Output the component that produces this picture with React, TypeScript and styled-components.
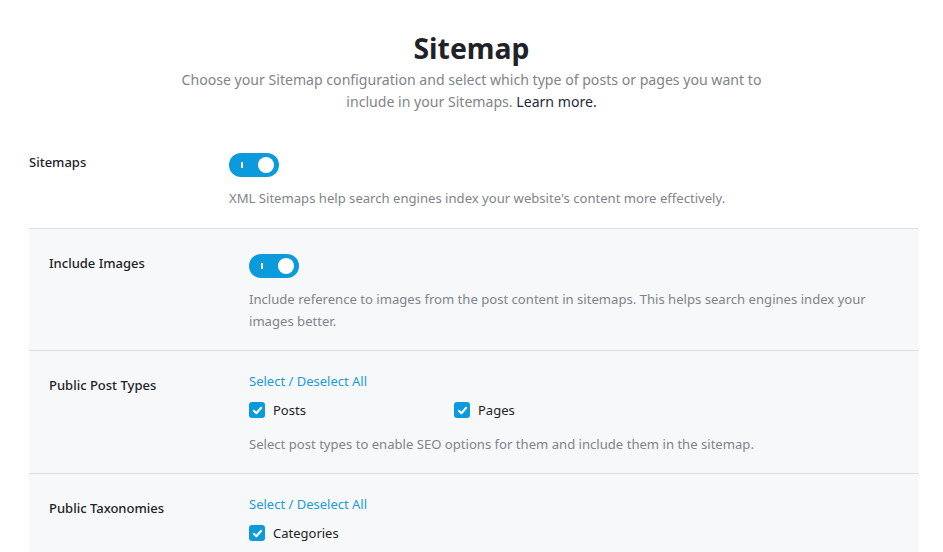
import React from 'react';
import styled, { createGlobalStyle } from 'styled-components';

const GlobalStyle = createGlobalStyle`
  body {
    margin: 0;
    background: #ffffff;
    font-family: 'Noto Sans', 'Open Sans', sans-serif;
    color: #1d2327;
  }
`;

const Page = styled.div`
  width: 943px;
  height: 552px;
  overflow: hidden;
  padding-top: 28px;
  box-sizing: border-box;
`;

const Header = styled.header`
  text-align: center;
  margin-bottom: 39px;
`;

const Title = styled.h1`
  margin: 0;
  font-size: 28.4px;
  line-height: 40px;
  font-weight: 700;
  color: #1f2329;
`;

const Intro = styled.p`
  margin: 1px auto 0;
  width: 600px;
  font-size: 14.1px;
  line-height: 22px;
  color: #80848a;
`;

const LearnMore = styled.a`
  color: #1f2a37;
  text-decoration: none;
`;

const Content = styled.div`
  width: 890px;
  margin-left: 29px;
`;

const Row = styled.div<{ $nested?: boolean }>`
  display: grid;
  grid-template-columns: 200px 1fr;
  padding: ${({ $nested }) => ($nested ? '24px 20px 18px' : '0 0 19px')};
  border-top: ${({ $nested }) => ($nested ? '1px solid #dcdfe4' : 'none')};
`;

const Panel = styled.div`
  background: #f7f8fa;
  border-top: 1px solid #dcdfe4;

  & > ${Row}:first-child {
    border-top: none;
  }
`;

const Label = styled.div`
  font-size: 13px;
  font-weight: 500;
  line-height: 20px;
  color: #1d2327;
`;

const Field = styled.div`
  display: flex;
  flex-direction: column;
  align-items: flex-start;
`;

const Help = styled.p`
  margin: 10px 0 0;
  font-size: 13.1px;
  line-height: 22px;
  color: #80848a;
  max-width: 640px;
`;

const Toggle = styled.span`
  position: relative;
  display: inline-block;
  margin-top: 1px;
  width: 50px;
  height: 24px;
  border-radius: 12px;
  background: #0b9bdc;

  &::before {
    content: '';
    position: absolute;
    left: 12px;
    top: 9px;
    width: 2px;
    height: 6px;
    background: #ffffff;
  }

  &::after {
    content: '';
    position: absolute;
    right: 5px;
    top: 4px;
    width: 16px;
    height: 16px;
    border-radius: 50%;
    background: #ffffff;
  }
`;

const SelectAll = styled.a`
  margin-top: -4px;
  font-size: 13px;
  line-height: 20px;
  color: #1a9cdb;
  text-decoration: none;
`;

const CheckGrid = styled.div`
  display: grid;
  grid-template-columns: 205px 205px;
  margin: 9px 0 3px;
`;

const CheckItem = styled.label`
  display: flex;
  align-items: center;
  gap: 8px;
  font-size: 13px;
  line-height: 20px;
  color: #1d2327;
`;

const Box = styled.span`
  display: inline-flex;
  align-items: center;
  justify-content: center;
  width: 16px;
  height: 16px;
  border-radius: 3px;
  background: #0b9bdc;
`;

const Check = () => (
  <Box>
    <svg width="11" height="11" viewBox="0 0 12 12" fill="none">
      <path d="M2 6.3 L4.8 9 L10 3" stroke="#fff" strokeWidth="2.2" strokeLinecap="round" strokeLinejoin="round" />
    </svg>
  </Box>
);

const App = () => {
  return (
    <>
      <GlobalStyle />
      <Page>
        <Header>
          <Title>Sitemap</Title>
          <Intro>
            Choose your Sitemap configuration and select which type of posts or pages you want to include in your
            Sitemaps. <LearnMore href="#">Learn more.</LearnMore>
          </Intro>
        </Header>
        <Content>
          <Row>
            <Label>Sitemaps</Label>
            <Field>
              <Toggle />
              <Help>XML Sitemaps help search engines index your website's content more effectively.</Help>
            </Field>
          </Row>
          <Panel>
            <Row $nested>
              <Label>Include Images</Label>
              <Field>
                <Toggle />
                <Help>
                  Include reference to images from the post content in sitemaps. This helps search engines index your
                  images better.
                </Help>
              </Field>
            </Row>
            <Row $nested>
              <Label>Public Post Types</Label>
              <Field>
                <SelectAll href="#">Select / Deselect All</SelectAll>
                <CheckGrid>
                  <CheckItem>
                    <Check />
                    Posts
                  </CheckItem>
                  <CheckItem>
                    <Check />
                    Pages
                  </CheckItem>
                </CheckGrid>
                <Help>Select post types to enable SEO options for them and include them in the sitemap.</Help>
              </Field>
            </Row>
            <Row $nested>
              <Label>Public Taxonomies</Label>
              <Field>
                <SelectAll href="#">Select / Deselect All</SelectAll>
                <CheckGrid>
                  <CheckItem>
                    <Check />
                    Categories
                  </CheckItem>
                </CheckGrid>
              </Field>
            </Row>
          </Panel>
        </Content>
      </Page>
    </>
  );
};

export default App;
